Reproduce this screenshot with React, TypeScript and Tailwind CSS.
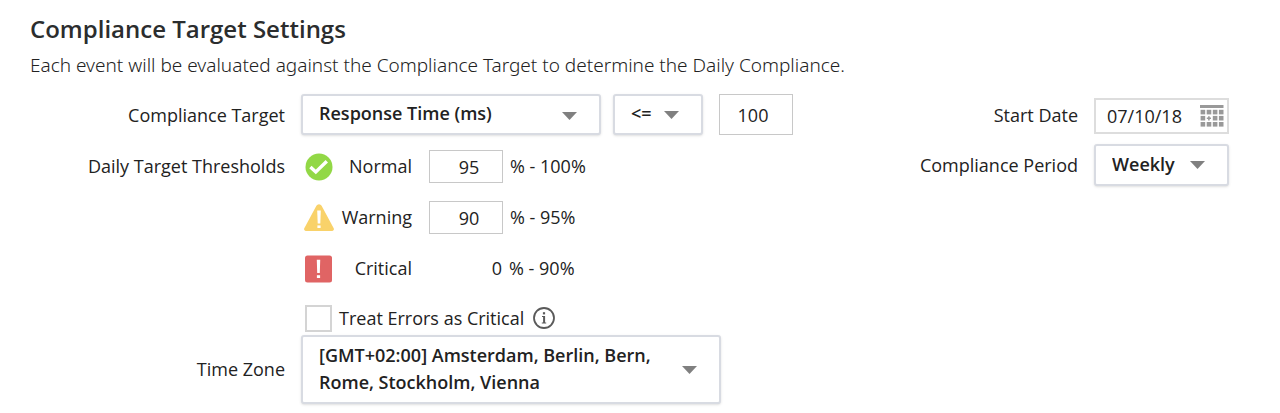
import { useState, type ComponentProps } from "react";
import clsx from "clsx";

const TIME_ZONES = [
  "[GMT+00:00] Dublin, Edinburgh, Lisbon, London",
  "[GMT+02:00] Amsterdam, Berlin, Bern, Rome, Stockholm, Vienna",
  "[GMT+03:00] Athens, Bucharest, Helsinki, Istanbul",
];

function NormalIcon() {
  return (
    <svg width="28" height="28" viewBox="0 0 28 28" aria-hidden="true">
      <circle cx="14" cy="14" r="13.5" fill="#92d846" />
      <path d="M5.4 13.9 10.8 19 21.8 8.2" fill="none" stroke="#fff" strokeWidth="3.4" />
    </svg>
  );
}

function WarningIcon() {
  return (
    <svg width="30" height="28" viewBox="0 0 30 28" aria-hidden="true">
      <path d="M12.4 1.8a3 3 0 0 1 5.2 0l12.1 22.4a1.9 1.9 0 0 1-1.7 2.8H2a1.9 1.9 0 0 1-1.7-2.8z" fill="#f9d26a" />
      <path d="M13.2 6.6h3.6l-.5 12.8h-2.6z" fill="#fff" />
      <rect x="13.4" y="21.4" width="3.2" height="2.6" fill="#fff" />
    </svg>
  );
}

function CriticalIcon() {
  return (
    <svg width="28" height="28" viewBox="0 0 28 28" aria-hidden="true">
      <rect x="0" y="0.5" width="27" height="27" rx="2.5" fill="#e06464" />
      <path d="M11.8 4.8h3.4L14.8 18h-2.6z" fill="#fff" />
      <rect x="11.9" y="20.2" width="3.2" height="2.8" fill="#fff" />
    </svg>
  );
}

function InfoIcon() {
  return (
    <svg width="22" height="22" viewBox="0 0 22 22" aria-hidden="true">
      <circle cx="11" cy="11" r="10" fill="none" stroke="#5a5a5a" strokeWidth="1.8" />
      <rect x="9.9" y="5.2" width="2.2" height="2.2" fill="#5a5a5a" />
      <path d="M9 9h3.1v6.4h1.1v1.1H8.8v-1.1h1.3v-5.3H9z" fill="#5a5a5a" />
    </svg>
  );
}

function CalendarIcon() {
  return (
    <svg width="24" height="22" viewBox="0 0 24 22" fill="#999" aria-hidden="true">
      <rect x="0" y="0" width="23.5" height="3" />
      {[4.8, 10.9, 17].map((y) =>
        [0.6, 6.7, 12.8, 18.9].map((x) =>
          x === 6.7 && y === 10.9 ? (
            <path key={`${x}-${y}`} d="M8.1 11.2h1.6v1.3H11v1.6H9.7v1.3H8.1v-1.3H6.8v-1.6h1.3z" />
          ) : (
            <rect key={`${x}-${y}`} x={x} y={y} width="4.6" height="4.6" />
          )
        )
      )}
    </svg>
  );
}

type SelectProps = ComponentProps<"select">;

function Select({ className, children, ...rest }: SelectProps) {
  return (
    <div className="relative w-fit shrink-0">
      <select
        {...rest}
        className={clsx("block appearance-none rounded-[3px] border-2 border-[#d8dbe2] bg-white pb-0.5 pl-4 font-semibold shadow-sm", className)}
      >
        {children}
      </select>
      <svg
        width="15"
        height="8"
        viewBox="0 0 15 8"
        aria-hidden="true"
        className="pointer-events-none absolute top-1/2 right-6 -translate-y-1/2"
      >
        <path d="M0 0h15L7.5 8z" fill="#808080" />
      </svg>
    </div>
  );
}

function NumberBox({ className, ...rest }: ComponentProps<"input">) {
  return <input type="text" inputMode="numeric" {...rest} className={clsx("w-[74px] border border-[#c8c8c8] bg-white text-center", className)} />;
}

export default function App() {
  const [target, setTarget] = useState("100");
  const [normal, setNormal] = useState("95");
  const [warning, setWarning] = useState("90");
  const [startDate, setStartDate] = useState("07/10/18");

  return (
    <main className="bg-white px-[30px] pt-3 pb-2 font-['Open_Sans',sans-serif] text-[18px] leading-[27px] text-[#222]">
      <h1 className="text-[24px] leading-[34px] font-semibold text-[#2b2d2e]">Compliance Target Settings</h1>
      <p className="mt-1 font-['Noto_Sans',sans-serif] text-[19px] leading-[30px] font-light">
        Each event will be evaluated against the Compliance Target to determine the Daily Compliance.
      </p>

      <div className="mt-[14px] flex items-start justify-between pr-[21px]">
        <div className="grid grid-cols-[255px_auto] gap-x-4">
          <label htmlFor="metric" className="flex h-[43px] items-center justify-end">Compliance Target</label>
          <div className="flex">
            <Select id="metric" className="h-[41px] w-[300px]">
              <option>Response Time (ms)</option>
              <option>Availability (%)</option>
            </Select>
            <div className="ml-3">
              <Select aria-label="Operator" className="h-[41px] w-[90px]">
                <option>&lt;=</option>
                <option>&gt;=</option>
              </Select>
            </div>
            <NumberBox aria-label="Target value" className="ml-4 h-[41px] pr-1.5" value={target} onChange={(e) => setTarget(e.target.value)} />
          </div>

          <div id="thresholds" className="mt-1 flex h-[51px] items-center justify-end">Daily Target Thresholds</div>
          <div role="group" aria-labelledby="thresholds" className="mt-1">
            <div className="flex h-[51px] items-center">
              <span className="flex w-9 justify-center"><NormalIcon /></span>
              <label htmlFor="normal" className="w-[75px] text-right">Normal</label>
              <NumberBox id="normal" className="ml-[17px] h-[33px] pl-1.5" value={normal} onChange={(e) => setNormal(e.target.value)} />
              <span className="ml-[7px]">% - 100%</span>
            </div>
            <div className="flex h-[51px] items-center">
              <span className="flex w-9 justify-center"><WarningIcon /></span>
              <label htmlFor="warning" className="w-[75px] text-right">Warning</label>
              <NumberBox id="warning" className="ml-[17px] h-[33px] pl-1.5" value={warning} onChange={(e) => setWarning(e.target.value)} />
              <span className="ml-[7px]">% - 95%</span>
            </div>
            <div className="flex h-[51px] items-center">
              <span className="flex w-9 justify-center"><CriticalIcon /></span>
              <span className="w-[75px] text-right">Critical</span>
              <span className="ml-4 w-[74px] text-right">0</span>
              <span className="ml-[7px]">% - {warning}%</span>
            </div>
            <div className="mt-[11px] ml-1 flex h-[30px] items-start">
              <input id="errors" type="checkbox" className="size-[27px] appearance-none border-2 border-[#d4d4d4] bg-white checked:bg-[#92d846]" />
              <label htmlFor="errors" className="ml-[7px]">Treat Errors as Critical</label>
              <button type="button" aria-label="About critical errors" className="mt-0.5 ml-[9px]"><InfoIcon /></button>
            </div>
          </div>

          <label htmlFor="zone" className="flex items-center justify-end">Time Zone</label>
          <Select id="zone" defaultValue={TIME_ZONES[1]} className="h-[69px] w-[420px] pr-14 whitespace-normal">
            {TIME_ZONES.map((z) => (
              <option key={z}>{z}</option>
            ))}
          </Select>
        </div>

        <div className="grid grid-cols-[auto_135px] gap-x-4">
          <label htmlFor="start" className="flex h-[43px] items-center justify-end">Start Date</label>
          <div className="relative pt-1">
            <input
              id="start"
              type="text"
              value={startDate}
              onChange={(e) => setStartDate(e.target.value)}
              className="h-9 w-full border-2 border-[#ddd] bg-white pl-[11px]"
            />
            <button type="button" aria-label="Open calendar" className="absolute top-[11px] right-[5px]"><CalendarIcon /></button>
          </div>
          <label htmlFor="period" className="mt-[7px] flex h-[42px] items-center justify-end">Compliance Period</label>
          <div className="mt-[7px]">
            <Select id="period" className="h-[42px] w-[135px]">
              <option>Weekly</option>
              <option>Monthly</option>
            </Select>
          </div>
        </div>
      </div>
    </main>
  );
}
